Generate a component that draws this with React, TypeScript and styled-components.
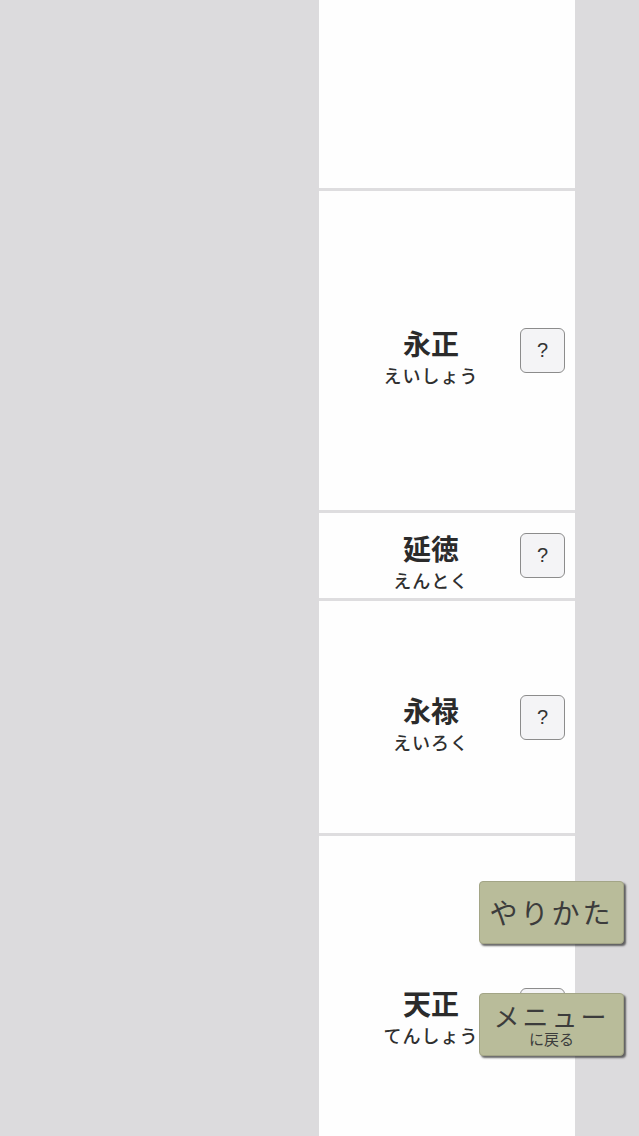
import React from 'react'
import styled, { createGlobalStyle } from 'styled-components'

const GlobalStyle = createGlobalStyle`
  html, body {
    margin: 0;
    padding: 0;
    background: #dcdbdd;
    overflow: hidden;
    font-family: "Noto Sans CJK JP", "Noto Sans", sans-serif;
  }
`

const Page = styled.div`
  width: 639px;
  height: 1136px;
  overflow: hidden;
  position: relative;
`

const Column = styled.div`
  margin-left: 319px;
  width: 256px;
  background: #dedddf;
  display: flex;
  flex-direction: column;
  gap: 3px;
`

const Row = styled.div<{ $h: number }>`
  height: ${p => p.$h}px;
  flex-shrink: 0;
  background: #fefefe;
  display: flex;
  align-items: center;
  padding-left: 56px;
  gap: 33px;
`

// the reading sits low, so the block is pushed down a little
const Names = styled.div`
  width: 112px;
  padding-top: 13px;
  display: flex;
  flex-direction: column;
  align-items: center;
  gap: 6px;
`

const Title = styled.div`
  font-family: "Noto Sans CJK JP", sans-serif;
  font-weight: 700;
  font-size: 28px;
  line-height: 30px;
  color: #2b2b2b;
`

const Reading = styled.div`
  font-size: 18px;
  line-height: 22px;
  font-weight: 500;
  color: #2f2f2f;
  letter-spacing: 1px;
`

const Help = styled.button`
  width: 45px;
  height: 45px;
  flex-shrink: 0;
  border: 1px solid #8c8c8c;
  border-radius: 6px;
  background: #f4f4f6;
  color: #333;
  font-family: "Liberation Sans", Arial, sans-serif;
  font-size: 20px;
  padding: 0;
`

const Floating = styled.div`
  position: absolute;
  right: 15px;
  bottom: 80px;
  display: flex;
  flex-direction: column;
  gap: 49px;
`

const OliveButton = styled.button`
  width: 145px;
  height: 63px;
  background: #b9bc9a;
  border: 1px solid #a3a586;
  border-radius: 4px;
  box-shadow: 2px 2px 2px rgba(40, 40, 40, 0.7);
  color: #3c3c3c;
  display: flex;
  flex-direction: column;
  align-items: center;
  justify-content: center;
  padding: 0;
  font-family: "Noto Sans CJK JP", sans-serif;
`

const Big = styled.span<{ $size: number }>`
  font-size: ${p => p.$size}px;
  line-height: 1.05;
  letter-spacing: 3px;
  font-weight: 400;
`

const Small = styled.span`
  font-size: 15px;
  line-height: 17px;
  font-weight: 400;
`

const eras = [
  { h: 319, title: '永正', reading: 'えいしょう' },
  { h: 85, title: '延徳', reading: 'えんとく' },
  { h: 232, title: '永禄', reading: 'えいろく' },
  { h: 348, title: '天正', reading: 'てんしょう' },
]

export default function App() {
  return (
    <Page>
      <GlobalStyle />
      <Column>
        <Row $h={188} />
        {eras.map(e => (
          <Row key={e.title} $h={e.h}>
            <Names>
              <Title>{e.title}</Title>
              <Reading>{e.reading}</Reading>
            </Names>
            <Help>?</Help>
          </Row>
        ))}
      </Column>
      <Floating>
        <OliveButton>
          <Big $size={28}>やりかた</Big>
        </OliveButton>
        <OliveButton>
          <Big $size={26}>メニュー</Big>
          <Small>に戻る</Small>
        </OliveButton>
      </Floating>
    </Page>
  )
}
